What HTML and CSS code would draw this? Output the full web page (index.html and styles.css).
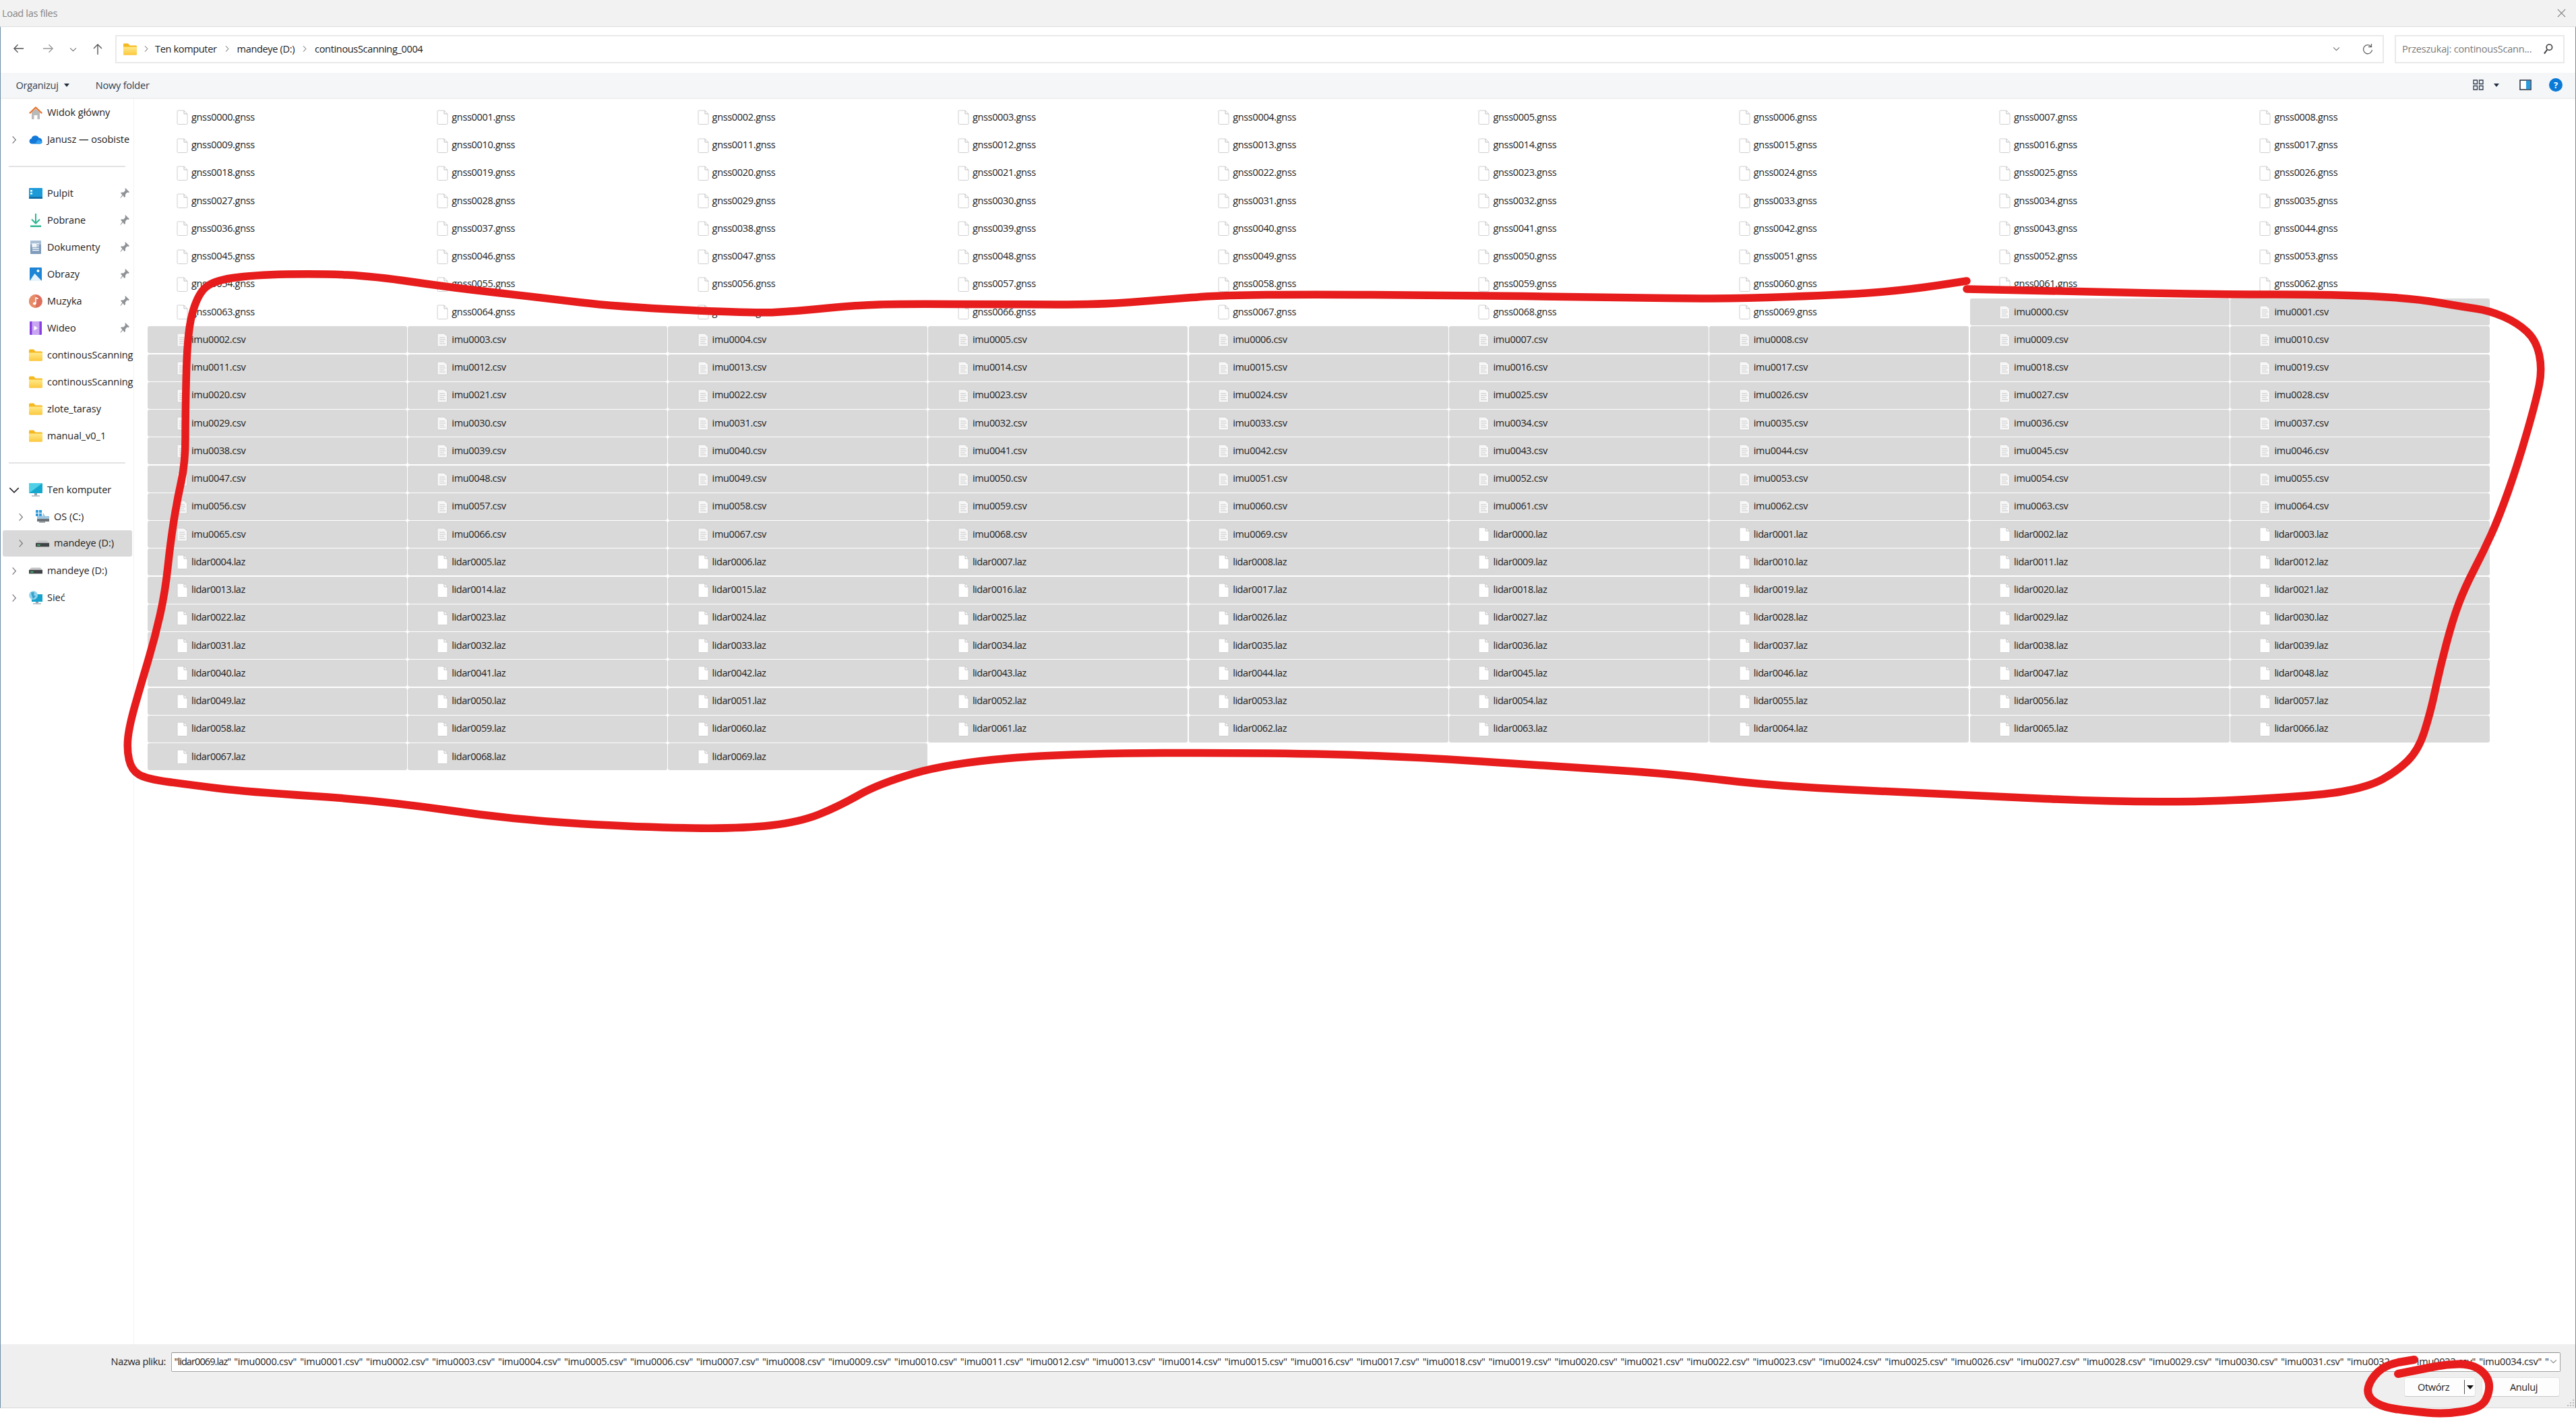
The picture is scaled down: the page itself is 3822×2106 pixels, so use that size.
FILE: index.html
```html
<!DOCTYPE html>
<html lang="pl">
<head>
<meta charset="utf-8">
<title>Load las files</title>
<link rel="stylesheet" href="styles.css">
</head>
<body>
<svg class="defs" width="0" height="0" aria-hidden="true">
<defs>
<linearGradient id="fold" x1="0" y1="0" x2="0" y2="1"><stop offset="0" stop-color="#ffe98a"/><stop offset="1" stop-color="#fcc93f"/></linearGradient>
<symbol id="folder" viewBox="0 0 20 18"><path d="M0 2a1.5 1.5 0 0 1 1.5-1.500H7L9.500 3.500H18.500A1.500 1.500 0 0 1 20 5V16a1.500 1.500 0 0 1-1.500 1.500H1.500A1.500 1.500 0 0 1 0 16Z" fill="#f5b81f"/><path d="M0 6.500a1 1 0 0 1 1-1H19a1 1 0 0 1 1 1V16a1.500 1.500 0 0 1-1.500 1.500H1.500A1.500 1.500 0 0 1 0 16Z" fill="url(#fold)"/></symbol>
<symbol id="home" viewBox="0 0 20 20"><path d="M4 9.500L10 4.500L16 9.500V20H12.500V14H7.500V20H4Z" fill="#b9b9b9"/><path d="M0 10.500L10 1L20 10.500L18.500 12L10 4L1.500 12Z" fill="#e8722a"/></symbol>
<symbol id="cloud" viewBox="0 0 20 13"><path d="M4 13A4 4 0 0 1 3.500 5.200A6 6 0 0 1 14.800 4.300A4.500 4.500 0 0 1 16.500 13Z" fill="#1379d8"/><path d="M9 13L14 6.500L20 10.500A3.500 3.500 0 0 1 16.500 13Z" fill="#36a2ee"/></symbol>
<symbol id="desktop" viewBox="0 0 20 16"><rect width="20" height="16" rx="1" fill="#1c9bd8"/><rect y="13" width="20" height="3" fill="#146fa6"/><rect x="2" y="3" width="3" height="2.500" fill="#fff"/><rect x="2" y="7" width="3" height="2.500" fill="#dff"/></symbol>
<symbol id="download" viewBox="0 0 20 20"><path d="M10 0V14M4 8.500L10 14.500L16 8.500" fill="none" stroke="#2db690" stroke-width="2"/><rect x="2" y="17.500" width="16" height="2.500" fill="#2db690"/></symbol>
<symbol id="doc" viewBox="0 0 16 20"><rect width="16" height="20" rx="1" fill="#7f9cbd"/><rect y="0" width="16" height="6" fill="#a9bfd6"/><path d="M3 5H9V9H3ZM10 5H13M10 8H13M3 11.500H13M3 14.500H13" stroke="#f2f6fa" stroke-width="1.300" fill="#f2f6fa"/></symbol>
<symbol id="pictures" viewBox="0 0 18 20"><rect width="18" height="20" rx="1" fill="#1d84d6"/><circle cx="12.500" cy="5" r="2" fill="#fff"/><path d="M0 20L7.500 9L18 20Z" fill="#e6f3fd"/></symbol>
<symbol id="music" viewBox="0 0 20 20"><circle cx="10" cy="10" r="10" fill="#de6f5c"/><path d="M0 10a10 10 0 0 1 10-10V20A10 10 0 0 1 0 10Z" fill="#e88b67"/><path d="M10 4.500V13" stroke="#fff" stroke-width="1.600"/><path d="M10 4.500L13.500 6.500" stroke="#fff" stroke-width="1.600"/><ellipse cx="8.300" cy="13.500" rx="2.400" ry="2" fill="#fff"/></symbol>
<symbol id="video" viewBox="0 0 18 20"><rect width="18" height="20" rx="1" fill="#8a3fe0"/><rect x="3.500" width="11" height="20" fill="#c9a6f2"/><path d="M6.500 6.500L12 10L6.500 13.500Z" fill="#fff"/></symbol>
<symbol id="pc" viewBox="0 0 20 20"><rect width="20" height="15" rx="1" fill="#14a8cf"/><path d="M0 0H20L0 15Z" fill="#4fd0e6"/><rect x="8" y="15" width="4" height="3" fill="#8ca0ad"/><rect x="4" y="18" width="12" height="2" fill="#b8c4cc"/></symbol>
<symbol id="osdrive" viewBox="0 0 20 20"><rect x="0" y="0" width="4" height="4" fill="#2f9bdc"/><rect x="5" y="0" width="4" height="4" fill="#2f9bdc"/><rect x="0" y="5" width="4" height="4" fill="#2f9bdc"/><rect x="5" y="5" width="4" height="4" fill="#2f9bdc"/><path d="M11 4L14 9H20V13H2V9H10Z" fill="#9fc6e0"/><rect x="2" y="13" width="18" height="4" fill="#6c7278"/><rect x="5" y="17" width="9" height="2" fill="#a8abae"/></symbol>
<symbol id="drive" viewBox="0 0 18 8"><path d="M3 0H15L18 3H0Z" fill="#c4c4c4"/><rect y="3" width="18" height="5" fill="#3f4347"/><rect x="2" y="5" width="4" height="1.500" fill="#42c26a"/></symbol>
<symbol id="globe" viewBox="0 0 20 20"><rect x="4" y="5" width="16" height="11" fill="#16a2cd"/><rect x="10" y="16" width="4" height="2" fill="#8ca0ad"/><rect x="6" y="18" width="12" height="2" fill="#b8c4cc"/><circle cx="6.500" cy="6.500" r="6.500" fill="#8fd3ee"/><path d="M3 2L8 2L7 6L10 8L6 12L4 7Z" fill="#3aa1c9"/></symbol>
<symbol id="pin" viewBox="0 0 14 16"><path d="M8 0L14 6L12.500 7L10.500 6.500L8 9.500L8 13L6.500 14L4.500 11L1 15L0.500 14.500L3.500 10L1 7.500L2 6.500L5.500 6.500L8 3.500L7.500 1Z" fill="#8f9296"/></symbol>
<symbol id="chev" viewBox="0 0 8 14"><path d="M1.500 1.500L6.500 7L1.500 12.500" fill="none" stroke="currentColor" stroke-width="1.300"/></symbol>
<symbol id="chevdown" viewBox="0 0 12 8"><path d="M1 1.500L6 6.500L11 1.500" fill="none" stroke="currentColor" stroke-width="1.300"/></symbol>
</defs>
</svg>

<div class="titlebar">
  <span class="title">Load las files</span>
  <svg class="close" viewBox="0 0 14 14"><path d="M1 1L13 13M13 1L1 13" fill="none" stroke="#777" stroke-width="1.100"/></svg>
</div>

<div class="frame">
  <div class="nav">
    <svg class="navbtn back" viewBox="0 0 18 16"><path d="M17 8H2M8 2L2 8L8 14" fill="none" stroke="#555" stroke-width="1.400"/></svg>
    <svg class="navbtn fwd" viewBox="0 0 18 16"><path d="M1 8H16M10 2L16 8L10 14" fill="none" stroke="#999" stroke-width="1.400"/></svg>
    <svg class="navdown"><use href="#chevdown"/></svg>
    <svg class="navbtn up" viewBox="0 0 16 18"><path d="M8 17V2M2 8L8 2L14 8" fill="none" stroke="#555" stroke-width="1.400"/></svg>
    <div class="address">
      <svg class="addr-folder"><use href="#folder"/></svg>
      <svg class="crumb-sep"><use href="#chev"/></svg>
      <span class="crumb">Ten komputer</span>
      <svg class="crumb-sep"><use href="#chev"/></svg>
      <span class="crumb">mandeye (D:)</span>
      <svg class="crumb-sep"><use href="#chev"/></svg>
      <span class="crumb">continousScanning_0004</span>
      <svg class="addr-down"><use href="#chevdown"/></svg>
      <svg class="refresh" viewBox="0 0 16 18"><path d="M13 5A6.500 6.500 0 1 0 14.500 10" fill="none" stroke="#666" stroke-width="1.300"/><path d="M13.500 1V5.500H9" fill="none" stroke="#666" stroke-width="1.300"/></svg>
    </div>
    <div class="search">
      <span class="search-text">Przeszukaj: continousScann...</span>
      <svg class="lens" viewBox="0 0 16 18"><circle cx="10" cy="6" r="4.500" fill="none" stroke="#444" stroke-width="1.800"/><path d="M6.500 10L2 16" stroke="#444" stroke-width="2.200"/></svg>
    </div>
  </div>

  <div class="toolbar">
    <span class="tool">Organizuj</span><span class="caret"></span>
    <span class="tool new">Nowy folder</span>
    <div class="tool-right">
      <svg class="views" viewBox="0 0 16 16"><path d="M1 1H6.500V6.500H1ZM9.500 1H15V6.500H9.500ZM1 9.500H6.500V15H1ZM9.500 9.500H15V15H9.500Z" fill="none" stroke="#2f3d52" stroke-width="1.300"/></svg>
      <span class="caret"></span>
      <svg class="pane" viewBox="0 0 18 16"><rect x="1" y="1" width="16" height="14" fill="#fff" stroke="#1f2d3d" stroke-width="1.500"/><rect x="10" y="1.800" width="6.300" height="12.400" fill="#2b9be0"/></svg>
      <span class="help">?</span>
    </div>
  </div>

  <div class="main">
    <nav class="side">
      <div class="item"><span class="slot"></span><svg class="ico"><use href="#home"/></svg><span class="lbl">Widok główny</span></div>
      <div class="item"><svg class="slot"><use href="#chev"/></svg><svg class="ico"><use href="#cloud"/></svg><span class="lbl">Janusz — osobiste</span></div>
      <div class="sep"></div>
      <div class="item"><span class="slot"></span><svg class="ico"><use href="#desktop"/></svg><span class="lbl">Pulpit</span><svg class="pin"><use href="#pin"/></svg></div>
      <div class="item"><span class="slot"></span><svg class="ico"><use href="#download"/></svg><span class="lbl">Pobrane</span><svg class="pin"><use href="#pin"/></svg></div>
      <div class="item"><span class="slot"></span><svg class="ico"><use href="#doc"/></svg><span class="lbl">Dokumenty</span><svg class="pin"><use href="#pin"/></svg></div>
      <div class="item"><span class="slot"></span><svg class="ico"><use href="#pictures"/></svg><span class="lbl">Obrazy</span><svg class="pin"><use href="#pin"/></svg></div>
      <div class="item"><span class="slot"></span><svg class="ico"><use href="#music"/></svg><span class="lbl">Muzyka</span><svg class="pin"><use href="#pin"/></svg></div>
      <div class="item"><span class="slot"></span><svg class="ico"><use href="#video"/></svg><span class="lbl">Wideo</span><svg class="pin"><use href="#pin"/></svg></div>
      <div class="item"><span class="slot"></span><svg class="ico"><use href="#folder"/></svg><span class="lbl">continousScanning</span></div>
      <div class="item"><span class="slot"></span><svg class="ico"><use href="#folder"/></svg><span class="lbl">continousScanning</span></div>
      <div class="item"><span class="slot"></span><svg class="ico"><use href="#folder"/></svg><span class="lbl">zlote_tarasy</span></div>
      <div class="item"><span class="slot"></span><svg class="ico"><use href="#folder"/></svg><span class="lbl">manual_v0_1</span></div>
      <div class="sep"></div>
      <div class="item"><svg class="slot open"><use href="#chevdown"/></svg><svg class="ico"><use href="#pc"/></svg><span class="lbl">Ten komputer</span></div>
      <div class="item sub"><svg class="slot"><use href="#chev"/></svg><svg class="ico"><use href="#osdrive"/></svg><span class="lbl">OS (C:)</span></div>
      <div class="item sub current"><svg class="slot"><use href="#chev"/></svg><svg class="ico"><use href="#drive"/></svg><span class="lbl">mandeye (D:)</span></div>
      <div class="item"><svg class="slot"><use href="#chev"/></svg><svg class="ico"><use href="#drive"/></svg><span class="lbl">mandeye (D:)</span></div>
      <div class="item"><svg class="slot"><use href="#chev"/></svg><svg class="ico"><use href="#globe"/></svg><span class="lbl">Sieć</span></div>
    </nav>

    <div class="files">
<div class="file">gnss0000.gnss</div><div class="file">gnss0001.gnss</div><div class="file">gnss0002.gnss</div><div class="file">gnss0003.gnss</div><div class="file">gnss0004.gnss</div><div class="file">gnss0005.gnss</div><div class="file">gnss0006.gnss</div><div class="file">gnss0007.gnss</div><div class="file">gnss0008.gnss</div>
<div class="file">gnss0009.gnss</div><div class="file">gnss0010.gnss</div><div class="file">gnss0011.gnss</div><div class="file">gnss0012.gnss</div><div class="file">gnss0013.gnss</div><div class="file">gnss0014.gnss</div><div class="file">gnss0015.gnss</div><div class="file">gnss0016.gnss</div><div class="file">gnss0017.gnss</div>
<div class="file">gnss0018.gnss</div><div class="file">gnss0019.gnss</div><div class="file">gnss0020.gnss</div><div class="file">gnss0021.gnss</div><div class="file">gnss0022.gnss</div><div class="file">gnss0023.gnss</div><div class="file">gnss0024.gnss</div><div class="file">gnss0025.gnss</div><div class="file">gnss0026.gnss</div>
<div class="file">gnss0027.gnss</div><div class="file">gnss0028.gnss</div><div class="file">gnss0029.gnss</div><div class="file">gnss0030.gnss</div><div class="file">gnss0031.gnss</div><div class="file">gnss0032.gnss</div><div class="file">gnss0033.gnss</div><div class="file">gnss0034.gnss</div><div class="file">gnss0035.gnss</div>
<div class="file">gnss0036.gnss</div><div class="file">gnss0037.gnss</div><div class="file">gnss0038.gnss</div><div class="file">gnss0039.gnss</div><div class="file">gnss0040.gnss</div><div class="file">gnss0041.gnss</div><div class="file">gnss0042.gnss</div><div class="file">gnss0043.gnss</div><div class="file">gnss0044.gnss</div>
<div class="file">gnss0045.gnss</div><div class="file">gnss0046.gnss</div><div class="file">gnss0047.gnss</div><div class="file">gnss0048.gnss</div><div class="file">gnss0049.gnss</div><div class="file">gnss0050.gnss</div><div class="file">gnss0051.gnss</div><div class="file">gnss0052.gnss</div><div class="file">gnss0053.gnss</div>
<div class="file">gnss0054.gnss</div><div class="file">gnss0055.gnss</div><div class="file">gnss0056.gnss</div><div class="file">gnss0057.gnss</div><div class="file">gnss0058.gnss</div><div class="file">gnss0059.gnss</div><div class="file">gnss0060.gnss</div><div class="file">gnss0061.gnss</div><div class="file">gnss0062.gnss</div>
<div class="file">gnss0063.gnss</div><div class="file">gnss0064.gnss</div><div class="file">gnss0065.gnss</div><div class="file">gnss0066.gnss</div><div class="file">gnss0067.gnss</div><div class="file">gnss0068.gnss</div><div class="file">gnss0069.gnss</div><div class="file csv">imu0000.csv</div><div class="file csv">imu0001.csv</div>
<div class="file csv">imu0002.csv</div><div class="file csv">imu0003.csv</div><div class="file csv">imu0004.csv</div><div class="file csv">imu0005.csv</div><div class="file csv">imu0006.csv</div><div class="file csv">imu0007.csv</div><div class="file csv">imu0008.csv</div><div class="file csv">imu0009.csv</div><div class="file csv">imu0010.csv</div>
<div class="file csv">imu0011.csv</div><div class="file csv">imu0012.csv</div><div class="file csv">imu0013.csv</div><div class="file csv">imu0014.csv</div><div class="file csv">imu0015.csv</div><div class="file csv">imu0016.csv</div><div class="file csv">imu0017.csv</div><div class="file csv">imu0018.csv</div><div class="file csv">imu0019.csv</div>
<div class="file csv">imu0020.csv</div><div class="file csv">imu0021.csv</div><div class="file csv">imu0022.csv</div><div class="file csv">imu0023.csv</div><div class="file csv">imu0024.csv</div><div class="file csv">imu0025.csv</div><div class="file csv">imu0026.csv</div><div class="file csv">imu0027.csv</div><div class="file csv">imu0028.csv</div>
<div class="file csv">imu0029.csv</div><div class="file csv">imu0030.csv</div><div class="file csv">imu0031.csv</div><div class="file csv">imu0032.csv</div><div class="file csv">imu0033.csv</div><div class="file csv">imu0034.csv</div><div class="file csv">imu0035.csv</div><div class="file csv">imu0036.csv</div><div class="file csv">imu0037.csv</div>
<div class="file csv">imu0038.csv</div><div class="file csv">imu0039.csv</div><div class="file csv">imu0040.csv</div><div class="file csv">imu0041.csv</div><div class="file csv">imu0042.csv</div><div class="file csv">imu0043.csv</div><div class="file csv">imu0044.csv</div><div class="file csv">imu0045.csv</div><div class="file csv">imu0046.csv</div>
<div class="file csv">imu0047.csv</div><div class="file csv">imu0048.csv</div><div class="file csv">imu0049.csv</div><div class="file csv">imu0050.csv</div><div class="file csv">imu0051.csv</div><div class="file csv">imu0052.csv</div><div class="file csv">imu0053.csv</div><div class="file csv">imu0054.csv</div><div class="file csv">imu0055.csv</div>
<div class="file csv">imu0056.csv</div><div class="file csv">imu0057.csv</div><div class="file csv">imu0058.csv</div><div class="file csv">imu0059.csv</div><div class="file csv">imu0060.csv</div><div class="file csv">imu0061.csv</div><div class="file csv">imu0062.csv</div><div class="file csv">imu0063.csv</div><div class="file csv">imu0064.csv</div>
<div class="file csv">imu0065.csv</div><div class="file csv">imu0066.csv</div><div class="file csv">imu0067.csv</div><div class="file csv">imu0068.csv</div><div class="file csv">imu0069.csv</div><div class="file laz">lidar0000.laz</div><div class="file laz">lidar0001.laz</div><div class="file laz">lidar0002.laz</div><div class="file laz">lidar0003.laz</div>
<div class="file laz">lidar0004.laz</div><div class="file laz">lidar0005.laz</div><div class="file laz">lidar0006.laz</div><div class="file laz">lidar0007.laz</div><div class="file laz">lidar0008.laz</div><div class="file laz">lidar0009.laz</div><div class="file laz">lidar0010.laz</div><div class="file laz">lidar0011.laz</div><div class="file laz">lidar0012.laz</div>
<div class="file laz">lidar0013.laz</div><div class="file laz">lidar0014.laz</div><div class="file laz">lidar0015.laz</div><div class="file laz">lidar0016.laz</div><div class="file laz">lidar0017.laz</div><div class="file laz">lidar0018.laz</div><div class="file laz">lidar0019.laz</div><div class="file laz">lidar0020.laz</div><div class="file laz">lidar0021.laz</div>
<div class="file laz">lidar0022.laz</div><div class="file laz">lidar0023.laz</div><div class="file laz">lidar0024.laz</div><div class="file laz">lidar0025.laz</div><div class="file laz">lidar0026.laz</div><div class="file laz">lidar0027.laz</div><div class="file laz">lidar0028.laz</div><div class="file laz">lidar0029.laz</div><div class="file laz">lidar0030.laz</div>
<div class="file laz">lidar0031.laz</div><div class="file laz">lidar0032.laz</div><div class="file laz">lidar0033.laz</div><div class="file laz">lidar0034.laz</div><div class="file laz">lidar0035.laz</div><div class="file laz">lidar0036.laz</div><div class="file laz">lidar0037.laz</div><div class="file laz">lidar0038.laz</div><div class="file laz">lidar0039.laz</div>
<div class="file laz">lidar0040.laz</div><div class="file laz">lidar0041.laz</div><div class="file laz">lidar0042.laz</div><div class="file laz">lidar0043.laz</div><div class="file laz">lidar0044.laz</div><div class="file laz">lidar0045.laz</div><div class="file laz">lidar0046.laz</div><div class="file laz">lidar0047.laz</div><div class="file laz">lidar0048.laz</div>
<div class="file laz">lidar0049.laz</div><div class="file laz">lidar0050.laz</div><div class="file laz">lidar0051.laz</div><div class="file laz">lidar0052.laz</div><div class="file laz">lidar0053.laz</div><div class="file laz">lidar0054.laz</div><div class="file laz">lidar0055.laz</div><div class="file laz">lidar0056.laz</div><div class="file laz">lidar0057.laz</div>
<div class="file laz">lidar0058.laz</div><div class="file laz">lidar0059.laz</div><div class="file laz">lidar0060.laz</div><div class="file laz">lidar0061.laz</div><div class="file laz">lidar0062.laz</div><div class="file laz">lidar0063.laz</div><div class="file laz">lidar0064.laz</div><div class="file laz">lidar0065.laz</div><div class="file laz">lidar0066.laz</div>
<div class="file laz">lidar0067.laz</div><div class="file laz">lidar0068.laz</div><div class="file laz">lidar0069.laz</div>
    </div>
  </div>

  <div class="foot">
    <div class="name-row">
      <label class="name-label">Nazwa pliku:</label>
      <div class="name-box">
        <span class="name-text"><span class="name-first">"lidar0069.laz"</span> "imu0000.csv" "imu0001.csv" "imu0002.csv" "imu0003.csv" "imu0004.csv" "imu0005.csv" "imu0006.csv" "imu0007.csv" "imu0008.csv" "imu0009.csv" "imu0010.csv" "imu0011.csv" "imu0012.csv" "imu0013.csv" "imu0014.csv" "imu0015.csv" "imu0016.csv" "imu0017.csv" "imu0018.csv" "imu0019.csv" "imu0020.csv" "imu0021.csv" "imu0022.csv" "imu0023.csv" "imu0024.csv" "imu0025.csv" "imu0026.csv" "imu0027.csv" "imu0028.csv" "imu0029.csv" "imu0030.csv" "imu0031.csv" "imu0032.csv" "imu0033.csv" "imu0034.csv" "</span>
        <svg class="name-down"><use href="#chevdown"/></svg>
      </div>
    </div>
    <div class="btn-row">
      <div class="btn open-btn"><span class="btn-label">Otwórz</span><span class="split"></span><span class="split-arrow"></span></div>
      <div class="btn cancel">Anuluj</div>
    </div>
    <svg class="grip" viewBox="0 0 12 12"><path d="M9 1h2v2H9zM5 5h2v2H5zM9 5h2v2H9zM1 9h2v2H1zM5 9h2v2H5zM9 9h2v2H9z" fill="#bdbdbd"/></svg>
  </div>
</div>

<svg class="ink" viewBox="0 0 3822 2106">
  <path class="stroke" d="M2918 417 L2878.500 423 Q2839 429 2794.500 433 Q2750 437 2652 440.500 Q2554 444 2473.500 442.500 Q2393 441 2259 439.500 Q2125 438 2035.500 437.500 Q1946 437 1879.500 437.500 Q1813 438 1768 441.500 Q1723 445 1678.500 448.500 Q1634 452 1567 452 Q1500 452 1420.500 451.500 Q1341 451 1305 452 Q1269 453 1224.500 457.500 Q1180 462 1149 463.500 Q1118 465 1015 460 Q912 455 858.500 448.500 Q805 442 738 434.500 Q671 427 613 418.500 Q555 410 515 408 Q475 406 425.500 407 Q376 408 345 412.500 Q314 417 303 428.500 Q292 440 285 466.500 Q278 493 276.500 552.500 Q275 612 275 649.500 Q275 687 269 714 Q263 741 258 772.500 Q253 804 249 841.500 Q245 879 237.500 912.500 Q230 946 220 979.500 Q210 1013 201 1044.500 Q192 1076 190 1094 Q188 1112 191.500 1127.500 Q195 1143 206 1149.500 Q217 1156 250 1160.500 Q283 1165 323.500 1170 Q364 1175 464.500 1181.500 Q565 1188 665 1202.500 Q765 1217 861 1222.500 Q957 1228 1028.500 1229 Q1100 1230 1143.500 1225 Q1187 1220 1215.500 1208.500 Q1244 1197 1274 1180 Q1304 1163 1355.500 1148 Q1407 1133 1495 1125.500 Q1583 1118 1726.500 1117.500 Q1870 1117 1973.500 1119.500 Q2077 1122 2196.500 1130 Q2316 1138 2396 1143 Q2476 1148 2555.500 1157.500 Q2635 1167 2755 1172.500 Q2875 1178 3034.500 1185.500 Q3194 1193 3313.500 1187.500 Q3433 1182 3473.500 1175 Q3514 1168 3535 1156.500 Q3556 1145 3572 1129.500 Q3588 1114 3597 1086 Q3606 1058 3613 1025 Q3620 992 3629.500 956 Q3639 920 3648 896 Q3657 872 3671 845 Q3685 818 3696.500 792.500 Q3708 767 3721.500 729 Q3735 691 3749 642.500 Q3763 594 3767.500 571 Q3772 548 3767.500 526.500 Q3763 505 3749 492 Q3735 479 3714.500 470 Q3694 461 3673 458 Q3652 455 3617.500 449 Q3583 443 3525.500 440 Q3468 437 3376 437 Q3284 437 3192 435 Q3100 433 2918 429"/>
  <path class="stroke ring" d="M3558 2039 L3575.500 2035.500 Q3593 2032 3611 2028.500 Q3629 2025 3647.500 2024.500 Q3666 2024 3678 2032 Q3690 2040 3692.500 2051.500 Q3695 2063 3688.500 2076.500 Q3682 2090 3655.500 2094.500 Q3629 2099 3600.500 2096.500 Q3572 2094 3551 2090.500 Q3530 2087 3520.500 2078.500 Q3511 2070 3514 2058.500 Q3517 2047 3528.500 2036 Q3540 2025 3561 2021.500 L3582 2018"/>
</svg>
</body>
</html>
```
FILE: styles.css
```css
* { box-sizing: border-box; }
html, body { margin: 0; padding: 0; }
body {
  width: 3822px;
  height: 2106px;
  background: #fff;
  font-family: "Open Sans", "Noto Sans", sans-serif;
  font-size: 14.5px;
  letter-spacing: -0.33px;
  color: #1c1c1c;
  overflow: hidden;
  position: relative;
}
.defs { position: absolute; }

.titlebar {
  height: 40px;
  background: #f2f2f2;
  border-bottom: 1px solid #dedede;
  display: flex;
  align-items: center;
  justify-content: space-between;
  padding: 0 15px 1px 3px;
}
.title { color: #858585; }
.close { width: 13px; height: 13px; }

.frame {
  height: 2050px;
  display: flex;
  flex-direction: column;
  border-left: 1.5px solid #6d8ea6;
  border-right: 1.5px solid #6d8ea6;
  border-bottom: 1px solid #d9d9d9;
}

.nav {
  height: 68px;
  display: flex;
  align-items: flex-start;
  padding-top: 12px;
}
.navbtn { flex: none; margin-top: 12px; }
.back { width: 17px; height: 16px; margin-left: 18px; }
.fwd { width: 17px; height: 16px; margin-left: 27px; }
.navdown { width: 11px; height: 7px; flex: none; margin: 18px 0 0 23px; color: #777; }
.up { width: 16px; height: 18px; margin-left: 23px; margin-top: 12px; }
.address, .search {
  height: 42px;
  border: 2px solid #e9e9e9;
  display: flex;
  align-items: center;
  background: #fff;
  padding-bottom: 1px;
}
.address { width: 3366px; margin-left: 18px; padding-left: 10px; flex: none; }
.addr-folder { width: 20px; height: 18px; margin-right: 7px; flex: none; }
.crumb-sep { width: 6px; height: 11px; margin: 0 10px 0 4px; color: #555; flex: none; }
.crumb + .crumb-sep { margin-left: 12px; margin-right: 12px; }
.addr-down { width: 11px; height: 7px; margin-left: auto; color: #777; flex: none; }
.refresh { width: 16px; height: 18px; margin: 0 14px 0 33px; flex: none; }
.search { width: 252px; margin-left: 16px; padding: 0 15px 1px 9px; justify-content: space-between; flex: none; }
.search-text { color: #7a7a7a; white-space: nowrap; letter-spacing: -0.2px; }
.lens { width: 15px; height: 18px; flex: none; }

.toolbar {
  height: 39px;
  background: #f5f6f7;
  border-bottom: 2px solid #f0f0f0;
  display: flex;
  align-items: center;
  padding: 0 0 1px 22.5px;
  color: #2f3d52;
  flex: none;
}
.tool { letter-spacing: -0.2px; }
.caret {
  width: 0; height: 0;
  border-left: 4.500px solid transparent;
  border-right: 4.500px solid transparent;
  border-top: 5.500px solid #1f2d3d;
  margin-left: 8px;
}
.new { margin-left: 39px; }
.tool-right { margin-left: auto; display: flex; align-items: center; padding-right: 19px; }
.views { width: 16px; height: 16px; }
.tool-right .caret { margin-left: 15px; }
.pane { width: 18px; height: 16px; margin-left: 30px; }
.help {
  width: 20px; height: 20px; border-radius: 50%;
  background: #0a7ad6; color: #fff;
  display: flex; align-items: center; justify-content: center;
  margin-left: 26px; font-weight: 700; font-size: 13px;
}

.main { flex: 1; display: flex; min-height: 0; }
.side {
  width: 198px;
  flex: none;
  border-right: 1px solid #f3f3f3;
  overflow: hidden;
}
.item {
  height: 40px;
  display: flex;
  align-items: center;
  padding-left: 12px;
}
.item.sub { padding-left: 22px; }
.item.current {
  background: #d9d9d9;
  margin: 0 2px 0 3px;
  padding-left: 19px;
  border-radius: 3px;
  height: 39px;
  margin-bottom: 1px;
}
.slot { width: 16px; height: 13px; flex: none; margin-right: 14px; color: #777; display: block; }
.slot.open { color: #333; }
.ico { width: 20px; height: 20px; flex: none; margin-right: 7px; }
.lbl { white-space: nowrap; flex: 0 1 auto; min-width: 0; letter-spacing: -0.03px; padding-bottom: 2px; }
.pin { width: 14px; height: 16px; margin-left: auto; margin-right: 6px; flex: none; }
.sep { height: 40px; display: flex; align-items: center; padding: 0 12px; }
.sep::before { content: ""; flex: 1; height: 2px; background: #e3e3e3; }

.files {
  flex: 1;
  padding: 7.250px 0 0 19.500px;
  display: grid;
  grid-template-columns: repeat(9, 385px);
  grid-auto-rows: 40px;
  column-gap: 1.300px;
  row-gap: 1.250px;
  align-content: start;
}
.file {
  display: flex;
  align-items: center;
  padding: 0 0 2px 43.500px;
  border-radius: 3px;
  white-space: nowrap;
}
.file::before {
  content: "";
  width: 17px;
  height: 22px;
  margin: 2px 5px 0 0;
  flex: none;
  background: url("data:image/svg+xml,%3Csvg xmlns='http://www.w3.org/2000/svg' viewBox='0 0 17 22'%3E%3Cpath d='M1.500 1H11L16 6V20A1.500 1.500 0 0 1 14.500 21.500H2.500A1.500 1.500 0 0 1 1 20V1.500Z' fill='%23fff' stroke='%23cfcfcf'/%3E%3Cpath d='M11 1V6H16' fill='none' stroke='%23bdbdbd'/%3E%3C/svg%3E") no-repeat center / contain;
}
.csv, .laz { background: #d9d9d9; }
.laz { letter-spacing: -0.45px; }
.csv::before {
  background: url("data:image/svg+xml,%3Csvg xmlns='http://www.w3.org/2000/svg' viewBox='0 0 17 22'%3E%3Cpath d='M1.500 2H11L15.500 6V20A1 1 0 0 1 14.500 21H2.500A1 1 0 0 1 1 20V2.500Z' fill='%23f7f7f7' stroke='%23cfcfcf'/%3E%3Cpath d='M4 8H12M4 11H13M4 14H11M4 17H13' stroke='%23c6c6c6'/%3E%3C/svg%3E") no-repeat center / contain;
}

.foot {
  height: 94px;
  flex: none;
  background: #efefef;
  padding: 12px 22px 0 0;
  position: relative;
}
.name-row { display: flex; align-items: center; height: 28px; }
.name-label { width: 245px; text-align: right; margin-right: 7.500px; flex: none; padding-bottom: 1px; }
.name-box {
  flex: 1;
  min-width: 0;
  height: 29px;
  background: #fff;
  border: 1px solid #a3a3a3;
  border-top-color: #8f8f8f;
  border-radius: 2px;
  display: flex;
  align-items: center;
  padding: 0 0 1px 4px;
}
.name-text { flex: 1; min-width: 0; white-space: nowrap; letter-spacing: -0.2px; word-spacing: 1.400px; }
.name-first { letter-spacing: -0.9px; }
.name-down { width: 11px; height: 7px; margin: 0 4px 0 8px; color: #888; flex: none; }
.btn-row { display: flex; justify-content: flex-end; gap: 9px; margin-top: 9px; padding-right: 1px; }
.btn {
  height: 29px;
  background: #fdfdfd;
  border: 1px solid #e3e3e3;
  border-bottom-color: #c9c9c9;
  border-radius: 4px;
  display: flex;
  align-items: center;
  justify-content: center;
}
.open-btn { width: 106px; justify-content: flex-start; padding-left: 19px; }
.btn-label { width: 69px; }
.split { width: 1px; height: 21px; background: #555; flex: none; }
.split-arrow {
  width: 0; height: 0; flex: none; margin-left: 3px;
  border-left: 5px solid transparent;
  border-right: 5px solid transparent;
  border-top: 6px solid #111;
}
.cancel { width: 116px; padding-left: 9px; }
.grip { position: absolute; right: 1px; bottom: 1px; width: 12px; height: 12px; }

.ink { position: absolute; left: 0; top: 0; width: 3822px; height: 2106px; pointer-events: none; }
.stroke { fill: none; stroke: #e71c1c; stroke-width: 11.500; stroke-linecap: round; stroke-linejoin: round; }
.ring { stroke-width: 12; }
```
